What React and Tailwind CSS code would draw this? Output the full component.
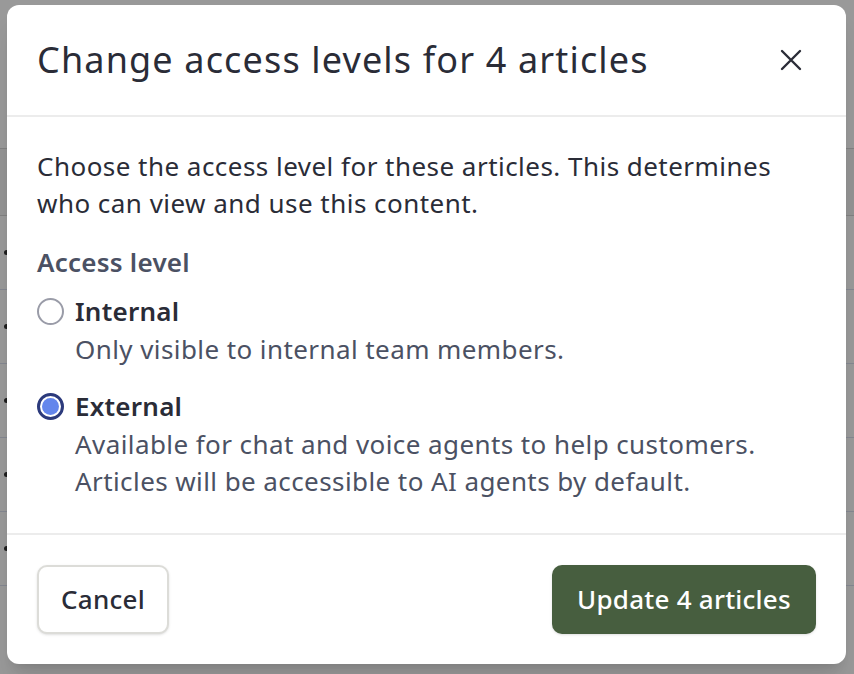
import React, { useState } from "react";

const options = [
  {
    id: "internal",
    label: "Internal",
    lines: ["Only visible to internal team members."],
  },
  {
    id: "external",
    label: "External",
    lines: [
      "Available for chat and voice agents to help customers.",
      "Articles will be accessible to AI agents by default.",
    ],
  },
];

const Radio = ({ checked }) =>
  checked ? (
    <span className="flex h-[27px] w-[27px] shrink-0 items-center justify-center rounded-full border-[3px] border-[#2c3a7c] bg-white p-[2px]">
      <span className="h-full w-full rounded-full bg-[#6486ec]" />
    </span>
  ) : (
    <span className="h-[27px] w-[27px] shrink-0 rounded-full border-2 border-[#9a9ca8] bg-white" />
  );

export default function App() {
  const [level, setLevel] = useState("external");

  return (
    <div className="relative h-[674px] w-[854px] overflow-hidden bg-white font-['Noto_Sans',sans-serif] tracking-[0.015em] text-[#2a2c37]">
      {/* page behind the dialog */}
      <div className="flex flex-col pt-[148px]">
        <div className="h-[68px] border-y border-[#d8d8d8] bg-[#f5f5f5]" />
        {[0, 1, 2, 3, 4].map((i) => (
          <div key={i} className="flex h-[74px] items-center border-b border-[#dde2f0] pl-1">
            <span className="h-[5px] w-[5px] rounded-full bg-[#333]" />
          </div>
        ))}
        <div className="ml-[68px] mt-2 h-10 w-[140px] rounded-full border-2 border-[#6c8f5a]" />
      </div>
      <div className="absolute inset-0 bg-black/40" />

      {/* dialog */}
      <div className="absolute left-[7px] top-[5px] flex h-[659px] w-[839px] flex-col rounded-xl bg-white shadow-xl">
        <div className="flex h-[112px] shrink-0 items-center justify-between border-b-2 border-[#ececec] pl-[30px] pr-[44px]">
          <h2 className="text-[36px] font-normal tracking-[0.032em]">Change access levels for 4 articles</h2>
          <button className="text-[#2a2c37]">
            <svg width="22" height="22" viewBox="0 0 22 22" fill="none" stroke="currentColor" strokeWidth="2.4" strokeLinecap="round">
              <path d="M2 2l18 18M20 2L2 20" />
            </svg>
          </button>
        </div>

        <div className="flex flex-1 flex-col px-[30px] pt-[31px]">
          <p className="text-[26px] leading-[37px] tracking-[0.018em]">
            Choose the access level for these articles. This determines who can view and use this content.
          </p>
          <div className="mt-[22px] text-[26px] font-semibold leading-[36px] text-[#4b5163]">Access level</div>
          <div className="mt-[13px] flex flex-col gap-[20px]">
            {options.map((o) => (
              <label key={o.id} className="flex cursor-pointer flex-col" onClick={() => setLevel(o.id)}>
                <span className="flex items-center gap-[11px] text-[26px] font-semibold leading-[36px]">
                  <Radio checked={level === o.id} />
                  {o.label}
                </span>
                <span className="mt-[2px] pl-[38px] text-[26px] leading-[37px] tracking-[0.016em] text-[#4b5163]">
                  {o.lines.map((l) => (
                    <span key={l} className="block">
                      {l}
                    </span>
                  ))}
                </span>
              </label>
            ))}
          </div>
        </div>

        <div className="flex h-[131px] shrink-0 items-center justify-between border-t-2 border-[#ececec] pl-[30px] pr-[30px]">
          <button className="h-[69px] w-[132px] rounded-[10px] border-2 border-[#dcdcd8] bg-white text-[26px] font-medium text-[#2a2c37] shadow-sm">
            Cancel
          </button>
          <button className="h-[69px] w-[264px] rounded-[10px] bg-[#475e3f] text-[26px] font-medium text-white shadow-sm">
            Update 4 articles
          </button>
        </div>
      </div>
    </div>
  );
}
